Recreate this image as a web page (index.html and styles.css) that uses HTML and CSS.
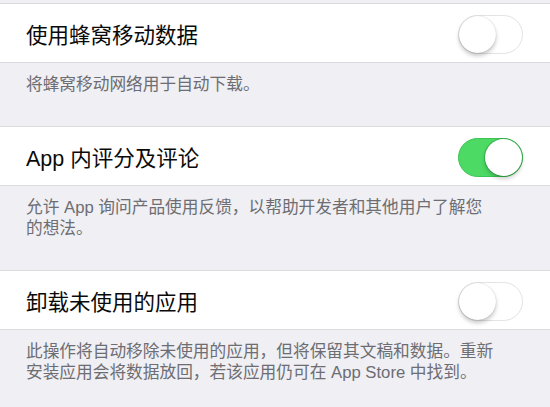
FILE: index.html
```html
<!DOCTYPE html>
<html lang="zh-CN">
<head>
<meta charset="utf-8">
<link rel="stylesheet" href="styles.css">
</head>
<body>
<div class="page">
  <div class="gap"></div>
  <div class="row">
    <span class="title">使用蜂窝移动数据</span>
    <span class="toggle"><span class="knob"></span></span>
  </div>
  <div class="footer">将蜂窝移动网络用于自动下载。</div>
  <div class="row">
    <span class="title">App 内评分及评论</span>
    <span class="toggle on"><span class="knob"></span></span>
  </div>
  <div class="footer">允许 App 询问产品使用反馈，以帮助开发者和其他用户了解您<br>的想法。</div>
  <div class="row">
    <span class="title">卸载未使用的应用</span>
    <span class="toggle"><span class="knob"></span></span>
  </div>
  <div class="footer">此操作将自动移除未使用的应用，但将保留其文稿和数据。重新<br>安装应用会将数据放回，若该应用仍可在 App Store 中找到。</div>
</div>
</body>
</html>
```
FILE: styles.css
```css
html, body {
  margin: 0;
  padding: 0;
  background: #efeff4;
}
.page {
  width: 550px;
  height: 407px;
  overflow: hidden;
  font-family: "Liberation Sans", "Noto Sans CJK SC", sans-serif;
}
.gap {
  height: 3px;
}
.row {
  box-sizing: border-box;
  height: 60px;
  background: #fff;
  border-top: 1px solid #dadade;
  border-bottom: 1px solid #dadade;
  display: flex;
  align-items: center;
  justify-content: space-between;
  padding: 0 27px 0 26px;
}
.title {
  font-size: 21.5px;
  color: #0a0a0a;
  padding-top: 1px;
}
.footer {
  padding: 11px 20px 31px 26px;
  font-size: 16.7px;
  line-height: 21px;
  color: #6d6d72;
  white-space: nowrap;
}
.toggle {
  box-sizing: border-box;
  width: 65px;
  height: 39px;
  border-radius: 20px;
  border: 1.5px solid #e3e3e6;
  background: #fff;
  display: flex;
  align-items: center;
  padding: 0;
  margin-top: 2px;
}
.knob {
  width: 37px;
  height: 37px;
  border-radius: 50%;
  background: #fff;
  box-shadow: 0 3px 4px rgba(0,0,0,0.22), 0 0 1px rgba(0,0,0,0.25);
}
.toggle.on {
  background: #4cd964;
  border-color: #3cc555;
  justify-content: flex-end;
}
.toggle.on .knob {
  box-shadow: 0 3px 4px rgba(0,0,0,0.2), 0 0 0 1px rgba(40,150,60,0.5);
}
```
